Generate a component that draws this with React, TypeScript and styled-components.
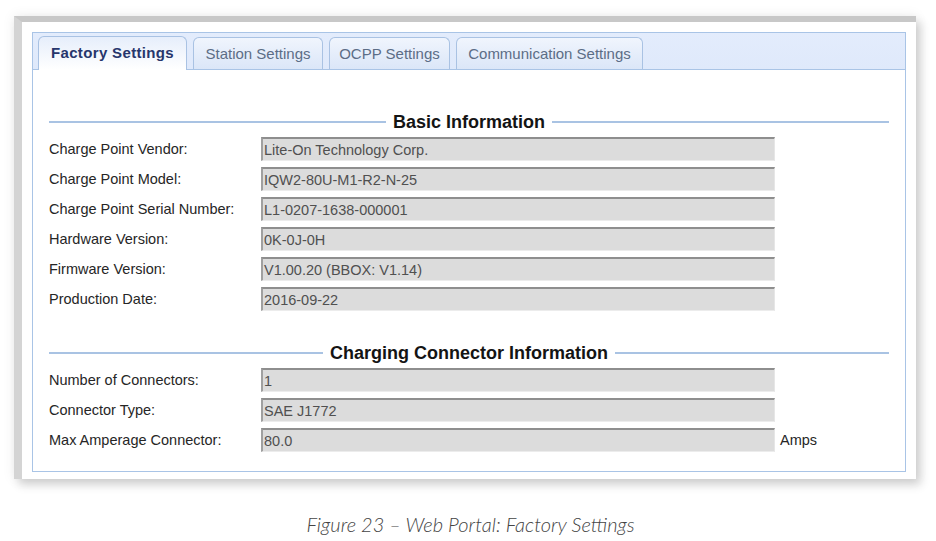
import React from "react";
import styled, { createGlobalStyle } from "styled-components";

const GlobalStyle = createGlobalStyle`
  html, body { margin: 0; padding: 0; background: #ffffff; }
  body { font-family: "Liberation Sans", Arial, sans-serif; }
  * { box-sizing: border-box; }
`;

const Page = styled.div`
  width: 936px;
  height: 541px;
  padding: 16px 0 0 14px;
  display: flex;
  flex-direction: column;
`;

const Frame = styled.div`
  width: 902px;
  background: #ffffff;
  border-top: 6px solid #c8c8c8;
  border-left: 8px solid #d4d4d4;
  padding: 10px 10px 7px 10px;
  box-shadow: 0 0 12px rgba(0, 0, 0, 0.08), 5px 6px 9px rgba(0, 0, 0, 0.16);
`;

const Panel = styled.div`
  border: 1px solid #a9c4e6;
  background: #ffffff;
`;

const TabStrip = styled.div`
  height: 37px;
  background: linear-gradient(#e3ecfc, #dfe9fb);
  border-bottom: 1px solid #a9c4e6;
  padding: 3px 0 0 5px;
  display: flex;
  align-items: flex-end;
  gap: 6px;
`;

const Tab = styled.div<{ $active?: boolean; $w: number }>`
  width: ${(p) => p.$w}px;
  height: ${(p) => (p.$active ? 34 : 32)}px;
  margin-bottom: ${(p) => (p.$active ? -1 : 0)}px;
  border: 1px solid #a9c2e3;
  border-bottom: none;
  border-radius: 6px 6px 0 0;
  background: ${(p) =>
    p.$active
      ? "linear-gradient(#e6eefb, #ffffff)"
      : "linear-gradient(#f0f5fd, #dbe6f8)"};
  color: ${(p) => (p.$active ? "#27366c" : "#5c6d86")};
  font-weight: ${(p) => (p.$active ? 700 : 400)};
  letter-spacing: ${(p) => (p.$active ? "0.35px" : "0")};
  font-size: 15px;
  display: flex;
  align-items: center;
  justify-content: center;
  padding-bottom: ${(p) => (p.$active ? 2 : 0)}px;
`;

const Content = styled.div`
  padding: 40px 16px 16px 16px;
`;

const SectionHeading = styled.div<{ $first?: boolean }>`
  height: 24px;
  margin-top: ${(p) => (p.$first ? 0 : 27)}px;
  display: flex;
  align-items: center;
  gap: 7px;
  font-size: 18px;
  font-weight: 700;
  color: #141414;
  &::before,
  &::after {
    content: "";
    flex: 1;
    height: 2px;
    background: #a9c3e3;
  }
`;

const Row = styled.div`
  height: 30px;
  display: flex;
  align-items: center;
`;

const Label = styled.div`
  width: 212px;
  font-size: 14.5px;
  color: #262626;
`;

const Field = styled.div`
  width: 514px;
  height: 24px;
  background: #dcdcdc;
  border-top: 2px solid #8e8e8e;
  border-left: 2px solid #a0a0a0;
  border-right: 1px solid #e6e6e6;
  border-bottom: 1px solid #ececec;
  padding-left: 1px;
  font-size: 14.5px;
  color: #505050;
  display: flex;
  align-items: center;
  white-space: nowrap;
`;

const Unit = styled.div`
  margin-left: 5px;
  font-size: 14.5px;
  color: #262626;
`;

const Caption = styled.div`
  margin-top: 33px;
  width: 911px;
  text-align: center;
  font-family: Lato, "Open Sans", sans-serif;
  font-style: italic;
  font-weight: 300;
  font-size: 20px;
  color: #444444;
  padding-left: 2px;
`;

const tabs = [
  { label: "Factory Settings", w: 149, active: true },
  { label: "Station Settings", w: 130 },
  { label: "OCPP Settings", w: 121 },
  { label: "Communication Settings", w: 187 },
];

const basic: [string, string][] = [
  ["Charge Point Vendor:", "Lite-On Technology Corp."],
  ["Charge Point Model:", "IQW2-80U-M1-R2-N-25"],
  ["Charge Point Serial Number:", "L1-0207-1638-000001"],
  ["Hardware Version:", "0K-0J-0H"],
  ["Firmware Version:", "V1.00.20 (BBOX: V1.14)"],
  ["Production Date:", "2016-09-22"],
];

const connector: [string, string, string?][] = [
  ["Number of Connectors:", "1"],
  ["Connector Type:", "SAE J1772"],
  ["Max Amperage Connector:", "80.0", "Amps"],
];

export default function App() {
  return (
    <>
      <GlobalStyle />
      <Page>
        <Frame>
          <Panel>
            <TabStrip>
              {tabs.map((t) => (
                <Tab key={t.label} $w={t.w} $active={t.active}>
                  {t.label}
                </Tab>
              ))}
            </TabStrip>
            <Content>
              <SectionHeading $first>Basic Information</SectionHeading>
              {basic.map(([l, v]) => (
                <Row key={l}>
                  <Label>{l}</Label>
                  <Field>{v}</Field>
                </Row>
              ))}
              <SectionHeading>Charging Connector Information</SectionHeading>
              {connector.map(([l, v, u]) => (
                <Row key={l}>
                  <Label>{l}</Label>
                  <Field>{v}</Field>
                  {u && <Unit>{u}</Unit>}
                </Row>
              ))}
            </Content>
          </Panel>
        </Frame>
        <Caption>Figure 23 – Web Portal: Factory Settings</Caption>
      </Page>
    </>
  );
}
